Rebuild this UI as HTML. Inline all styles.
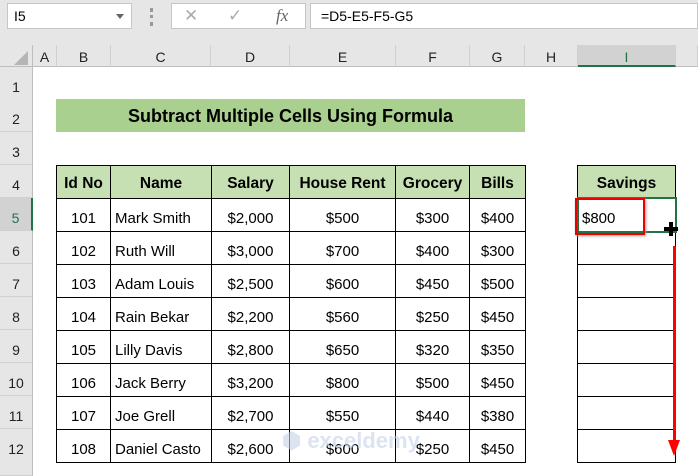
<!DOCTYPE html><html><head><style>
body{margin:0;width:698px;height:476px;overflow:hidden;background:#fff;font-family:"Liberation Sans",sans-serif;position:relative}
div{position:absolute;box-sizing:border-box}
.ch{top:45px;height:22px;border-right:1px solid #d0d0d0;background:#e6e6e6;text-align:center;font-size:14px;line-height:24px;color:#222;border-bottom:1px solid #bdbdbd}
.rh{left:0;width:33px;height:33px;background:#e6e6e6;border-bottom:1px solid #d0d0d0;border-right:1px solid #bdbdbd;text-align:center;font-size:14px;line-height:40px;color:#222}
.c{height:34px;border:1px solid #000;font-size:15px;line-height:40px;color:#000;white-space:nowrap;overflow:hidden}
.h{background:#c6e0b4;font-weight:bold;text-align:center;font-size:15.5px;line-height:36px}
</style></head><body>
<div style="left:0;top:0;width:698px;height:45px;background:#e6e6e6"></div>
<div style="left:7px;top:3px;width:125px;height:26px;background:#fff;border:1px solid #c6c6c6;font-size:14px;line-height:24px;padding-left:6px">I5</div>
<div style="left:116px;top:14px;width:0;height:0;border-left:4px solid transparent;border-right:4px solid transparent;border-top:5px solid #666"></div>
<div style="left:150px;top:8px;width:3px;height:18px;border-left:3px dotted #999"></div>
<div style="left:171px;top:3px;width:135px;height:26px;background:#fff;border:1px solid #c6c6c6;color:#aaa;font-size:17px;line-height:24px"><span style="position:absolute;left:12px">✕</span><span style="position:absolute;left:56px">✓</span><span style="position:absolute;left:104px;font-family:'Liberation Serif',serif;font-style:italic;color:#666">fx</span></div>
<div style="left:310px;top:3px;width:388px;height:26px;background:#fff;border:1px solid #c6c6c6;font-size:14px;line-height:24px;padding-left:10px">=D5-E5-F5-G5</div>
<div style="left:0;top:45px;width:33px;height:22px;background:#e6e6e6;border-right:1px solid #bdbdbd;border-bottom:1px solid #bdbdbd"></div>
<div style="left:14px;top:51px;width:0;height:0;border-left:14px solid transparent;border-bottom:14px solid #b5b5b5"></div>
<div class="ch" style="left:33px;width:24px">A</div>
<div class="ch" style="left:57px;width:54px">B</div>
<div class="ch" style="left:111px;width:100px">C</div>
<div class="ch" style="left:211px;width:79px">D</div>
<div class="ch" style="left:290px;width:106px">E</div>
<div class="ch" style="left:396px;width:74px">F</div>
<div class="ch" style="left:470px;width:55px">G</div>
<div class="ch" style="left:525px;width:53px">H</div>
<div class="ch" style="left:578px;width:98px;background:#d2d2d2;border-bottom:2px solid #217346;color:#217346">I</div>
<div class="ch" style="left:676px;width:22px"></div>
<div class="rh" style="top:67px">1</div><div class="rh" style="top:99px">2</div><div class="rh" style="top:132px">3</div><div class="rh" style="top:165px">4</div>
<div class="rh" style="top:198px;background:#d2d2d2;border-right:2px solid #217346;color:#217346">5</div>
<div class="rh" style="top:231px">6</div><div class="rh" style="top:264px">7</div><div class="rh" style="top:297px">8</div><div class="rh" style="top:330px">9</div><div class="rh" style="top:363px">10</div><div class="rh" style="top:396px">11</div><div class="rh" style="top:429px;height:47px">12</div>
<div style="left:56px;top:99px;width:469px;height:33px;background:#a9d08e;text-align:center;font-weight:bold;font-size:18px;line-height:35px">Subtract Multiple Cells Using Formula</div>
<div id="t"></div>
<script>
var cols=[[56,55],[110,102],[211,79],[289,107],[395,75],[469,57]];
var al=['center','left','center','center','center','center'];
var hd=['Id No','Name','Salary','House Rent','Grocery','Bills'];
var d=[['101','Mark Smith','$2,000','$500','$300','$400'],['102','Ruth Will','$3,000','$700','$400','$300'],['103','Adam Louis','$2,500','$600','$450','$500'],['104','Rain Bekar','$2,200','$560','$250','$450'],['105','Lilly Davis','$2,800','$650','$320','$350'],['106','Jack Berry','$3,200','$800','$500','$450'],['107','Joe Grell','$2,700','$550','$440','$380'],['108','Daniel Casto','$2,600','$600','$250','$450']];
var h='';
for(var j=0;j<6;j++)h+='<div class="c h" style="left:'+cols[j][0]+'px;top:165px;width:'+cols[j][1]+'px">'+hd[j]+'</div>';
for(var i=0;i<8;i++)for(var j=0;j<6;j++){var t=198+i*33;h+='<div class="c" style="left:'+cols[j][0]+'px;top:'+t+'px;width:'+cols[j][1]+'px;text-align:'+al[j]+';padding-left:'+(j==1?4:0)+'px">'+d[i][j]+'</div>';}
h+='<div class="c h" style="left:577px;top:165px;width:99px">Savings</div>';
for(var i=0;i<8;i++)h+='<div class="c" style="left:577px;top:'+(198+i*33)+'px;width:99px;padding-left:4px">'+(i==0?'$800':'')+'</div>';
document.getElementById('t').outerHTML=h;
</script>
<div style="left:577px;top:197px;width:100px;height:36px;border:2px solid #217346"></div>
<div style="left:575px;top:198px;width:70px;height:37px;border:2px solid #e00;box-shadow:1px 1px 3px #999"></div>
<div style="left:664px;top:227px;width:14px;height:4px;background:#000"></div>
<div style="left:669px;top:222px;width:4px;height:14px;background:#000"></div>
<div style="left:673px;top:246px;width:3px;height:196px;background:#f00"></div>
<div style="left:668px;top:440px;width:0;height:0;border-left:6px solid transparent;border-right:6px solid transparent;border-top:16px solid #f00"></div>
<div style="left:282px;top:428px;width:160px;height:30px;color:#c5d3ea;font-weight:bold;font-size:22px;line-height:26px;opacity:.6;white-space:nowrap">⬢ exceldemy</div>
</body></html>
